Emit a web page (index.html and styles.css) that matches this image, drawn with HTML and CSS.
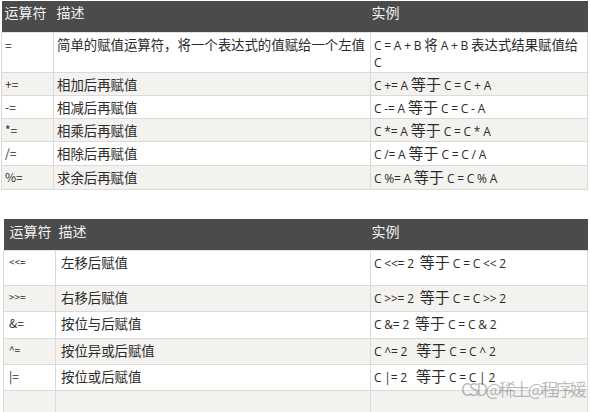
FILE: index.html
```html
<!DOCTYPE html>
<html lang="zh">
<head>
<meta charset="utf-8">
<link rel="stylesheet" href="styles.css">
</head>
<body>
<div class="page">
  <table class="ops ops-1">
    <colgroup><col class="c1"><col class="c2"><col class="c3"></colgroup>
    <thead>
      <tr class="head"><th>运算符</th><th>描述</th><th>实例</th></tr>
    </thead>
    <tbody>
      <tr class="tall"><td>=</td><td>简单的赋值运算符，将一个表达式的值赋给一个左值</td><td><span class="lat">C = A + B</span> 将 <span class="lat">A + B</span> 表达式结果赋值给 <span class="lat">C</span></td></tr>
      <tr class="alt"><td>+=</td><td>相加后再赋值</td><td><span class="lat">C += A</span> <span class="big">等于</span> <span class="lat">C = C + A</span></td></tr>
      <tr><td>-=</td><td>相减后再赋值</td><td><span class="lat">C -= A</span> <span class="big">等于</span> <span class="lat">C = C - A</span></td></tr>
      <tr class="alt"><td>*=</td><td>相乘后再赋值</td><td><span class="lat">C *= A</span> <span class="big">等于</span> <span class="lat">C = C * A</span></td></tr>
      <tr class="r24"><td>/=</td><td>相除后再赋值</td><td><span class="lat">C /= A</span> <span class="big">等于</span> <span class="lat">C = C / A</span></td></tr>
      <tr class="alt r24"><td>%=</td><td>求余后再赋值</td><td><span class="lat">C %= A</span> <span class="big">等于</span> <span class="lat">C = C % A</span></td></tr>
    </tbody>
  </table>

  <table class="ops ops-2">
    <colgroup><col class="c1"><col class="c2"><col class="c3"></colgroup>
    <thead>
      <tr class="head"><th>运算符</th><th>描述</th><th>实例</th></tr>
    </thead>
    <tbody>
      <tr class="tall2"><td class="sm">&lt;&lt;=</td><td>左移后赋值</td><td><span class="lat">C &lt;&lt;= 2</span>&nbsp; <span class="big">等于</span> <span class="lat">C = C &lt;&lt; 2</span></td></tr>
      <tr class="alt"><td class="sm">&gt;&gt;=</td><td>右移后赋值</td><td><span class="lat">C &gt;&gt;= 2</span>&nbsp; <span class="big">等于</span> <span class="lat">C = C &gt;&gt; 2</span></td></tr>
      <tr class="r27"><td>&amp;=</td><td>按位与后赋值</td><td><span class="lat">C &amp;= 2</span>&nbsp; <span class="big">等于</span> <span class="lat">C = C &amp; 2</span></td></tr>
      <tr class="alt"><td class="sm">^=</td><td>按位异或后赋值</td><td><span class="lat">C ^= 2</span>&nbsp;&nbsp; <span class="big">等于</span> <span class="lat">C = C ^ 2</span></td></tr>
      <tr><td>|=</td><td>按位或后赋值</td><td><span class="lat">C |= 2</span>&nbsp;&nbsp; <span class="big">等于</span> <span class="lat">C = C | 2</span></td></tr>
      <tr class="alt empty"><td></td><td></td><td></td></tr>
    </tbody>
  </table>

  <div class="watermark">CSD@稀土@程序媛</div>
</div>
</body>
</html>
```

FILE: styles.css
```css
html, body {
  margin: 0;
  padding: 0;
  background: #ffffff;
  overflow: hidden;
}

.page {
  position: relative;
  width: 590px;
  height: 412px;
  overflow: hidden;
  font-family: "Noto Sans CJK SC", "Noto Sans", sans-serif;
  color: #2b2b2b;
}

.ops {
  border-collapse: collapse;
  table-layout: fixed;
  font-size: 13.4px;
}

.ops-1 {
  width: 587px;
  margin: 1px 0 0 1px;
}

.ops-2 {
  width: 585px;
  margin: 29px 0 0 3px;
}

.ops-1 .c1 { width: 52px; }
.ops-1 .c2 { width: 317px; }
.ops-2 .c1 { width: 52px; }
.ops-2 .c2 { width: 315px; }

.ops th {
  background: #4b4b4b;
  color: #f2f2f2;
  font-weight: normal;
  font-size: 14px;
  text-align: left;
  vertical-align: top;
  padding: 2px 3px 0;
  height: 29px;
  box-sizing: border-box;
  line-height: 18px;
  border: none;
}
.ops-1 th { height: 31px; }
.ops-2 th { height: 32px; padding-top: 3px; }
.ops-2 th:first-child { padding-left: 6px; }
.ops-2 th:nth-child(2) { padding-left: 3px; }
.ops th:last-child { padding-left: 1px; }

.ops td {
  border: 1px solid #dadada;
  border-top-color: #e2e2e2;
  padding: 0 3px;
  height: 23px;
  box-sizing: border-box;
  line-height: 16px;
  vertical-align: middle;
  background: #ffffff;
  white-space: nowrap;
  overflow: hidden;
}
.ops td:first-child { font-size: 12px; padding-left: 3px; }
.ops-2 td:first-child { padding-left: 5px; }
.ops-2 td:nth-child(2) { padding-left: 5px; }

.ops tr.alt td { background: #f3f2ef; }

.ops tr.r24 td { height: 24px; }

.ops-1 tr.tall td {
  height: 40px;
  vertical-align: top;
  padding-top: 3px;
  white-space: normal;
  line-height: 17px;
}

.ops-2 td { height: 26px; vertical-align: top; padding-top: 3px; }
.ops-2 tr.r27 td { height: 27px; }
.ops-2 tr.tall2 td { height: 35px; padding-top: 3px; }
.ops-2 tr.empty td { height: 40px; }

.ops td.sm { font-size: 10px; }

.lat {
  font-family: "Open Sans", "Noto Sans", sans-serif;
  font-size: 12px;
  line-height: 1;
  letter-spacing: -0.2px;
}

.big {
  font-size: 15px;
  line-height: 1;
}

.watermark {
  position: absolute;
  left: 461px;
  top: 379px;
  font-size: 17px;
  line-height: 20px;
  color: rgba(120, 120, 120, 0.5);
  white-space: nowrap;
  letter-spacing: -2.6px;
}
```
